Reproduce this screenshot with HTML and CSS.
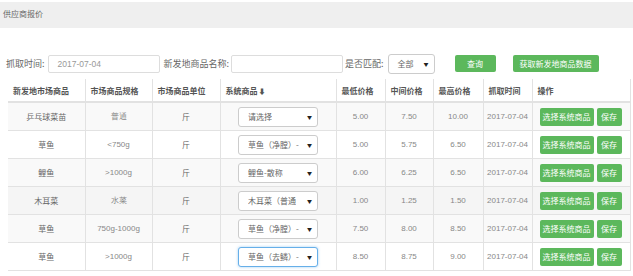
FILE: index.html
```html
<!DOCTYPE html>
<html>
<head>
<meta charset="utf-8">
<link rel="stylesheet" href="styles.css">
</head>
<body>
<div class="title-bar">供应商报价</div>
<div class="search">
  <span class="label">抓取时间:</span>
  <div class="input date">2017-07-04</div>
  <span class="label">新发地商品名称:</span>
  <div class="input name"></div>
  <span class="label">是否匹配:</span>
  <div class="select filter"><span>全部</span><span class="arrow">▼</span></div>
  <button class="btn query">查询</button>
  <button class="btn fetch">获取新发地商品数据</button>
</div>
<table class="grid">
  <colgroup>
    <col style="width:77px"><col style="width:67px"><col style="width:68px"><col style="width:116px">
    <col style="width:49px"><col style="width:48px"><col style="width:50px"><col style="width:49px"><col style="width:98px">
  </colgroup>
  <thead>
    <tr><th>新发地市场商品</th><th>市场商品规格</th><th>市场商品单位</th><th>系统商品<span class="sort">⬇</span></th><th>最低价格</th><th>中间价格</th><th>最高价格</th><th>抓取时间</th><th>操作</th></tr>
  </thead>
  <tbody>
    <tr class="odd"><td>乒乓球菜苗</td><td>普通</td><td>斤</td><td><div class="select cell"><span>请选择</span><span class="arrow">▼</span></div></td><td>5.00</td><td>7.50</td><td>10.00</td><td>2017-07-04</td><td class="ops"><button class="btn sm">选择系统商品</button><button class="btn sm save">保存</button></td></tr>
    <tr><td>草鱼</td><td>&lt;750g</td><td>斤</td><td><div class="select cell"><span>草鱼（净膛）-</span><span class="arrow">▼</span></div></td><td>5.00</td><td>5.75</td><td>6.50</td><td>2017-07-04</td><td class="ops"><button class="btn sm">选择系统商品</button><button class="btn sm save">保存</button></td></tr>
    <tr class="odd"><td>鲤鱼</td><td>&gt;1000g</td><td>斤</td><td><div class="select cell"><span>鲤鱼-散称</span><span class="arrow">▼</span></div></td><td>6.00</td><td>6.25</td><td>6.50</td><td>2017-07-04</td><td class="ops"><button class="btn sm">选择系统商品</button><button class="btn sm save">保存</button></td></tr>
    <tr class="hover"><td>木耳菜</td><td>水菜</td><td>斤</td><td><div class="select cell"><span>木耳菜（普通</span><span class="arrow">▼</span></div></td><td>1.00</td><td>1.25</td><td>1.50</td><td>2017-07-04</td><td class="ops"><button class="btn sm">选择系统商品</button><button class="btn sm save">保存</button></td></tr>
    <tr class="odd"><td>草鱼</td><td>750g-1000g</td><td>斤</td><td><div class="select cell"><span>草鱼（净膛）-</span><span class="arrow">▼</span></div></td><td>7.50</td><td>8.00</td><td>8.50</td><td>2017-07-04</td><td class="ops"><button class="btn sm">选择系统商品</button><button class="btn sm save">保存</button></td></tr>
    <tr><td>草鱼</td><td>&gt;1000g</td><td>斤</td><td><div class="select cell focus"><span>草鱼（去鳞）-</span><span class="arrow">▼</span></div></td><td>8.50</td><td>8.75</td><td>9.00</td><td>2017-07-04</td><td class="ops"><button class="btn sm">选择系统商品</button><button class="btn sm save">保存</button></td></tr>
  </tbody>
</table>
</body>
</html>
```
FILE: styles.css
```css
html, body {
  margin: 0;
  padding: 0;
  background: #fff;
  font-family: "Noto Sans CJK SC", "Liberation Sans", sans-serif;
  font-size: 8px;
  color: #666;
}
.title-bar {
  margin-top: 2px;
  height: 26px;
  line-height: 24px;
  background: #efefef;
  padding-left: 3px;
  color: #666;
  font-size: 8px;
}
.search {
  display: flex;
  align-items: center;
  margin-top: 26px;
  padding-left: 6px;
  height: 19px;
}
.label {
  color: #666;
  white-space: nowrap;
  font-size: 9px;
}
.input {
  box-sizing: border-box;
  height: 18px;
  border: 1px solid #ddd;
  border-radius: 2px;
  padding-left: 9px;
  line-height: 16px;
  color: #999;
  font-family: "Liberation Sans", sans-serif;
  font-size: 8.5px;
}
.input.date { width: 112px; margin-left: 3px; margin-right: 4px; }
.input.name { width: 112px; margin-left: 2px; margin-right: 2px; }
.select {
  box-sizing: border-box;
  display: flex;
  align-items: center;
  justify-content: space-between;
  border: 1px solid #ccc;
  border-radius: 3px;
  background: #fff;
  color: #666;
}
.select .arrow {
  font-size: 5px;
  color: #222;
  flex: none;
}
.select.filter {
  width: 47px;
  height: 20px;
  margin-left: 4px;
  padding: 0 5px 0 9px;
}
.btn {
  border: none;
  border-radius: 2px;
  background: #5cb85c;
  color: #fff;
  font-family: "Noto Sans CJK SC", sans-serif;
  font-size: 8px;
  padding: 0;
  cursor: pointer;
}
.btn.query { width: 41px; height: 17px; margin-left: 20px; }
.btn.fetch { width: 86px; height: 17px; margin-left: 17px; }
.grid {
  margin-top: 6px;
  margin-left: 8px;
  width: 622px;
  border-collapse: collapse;
  table-layout: fixed;
}
.grid th, .grid td {
  border: 1px solid #e2e2e2;
  padding: 0;
  white-space: nowrap;
  overflow: hidden;
}
.grid th {
  height: 22px;
  text-align: left;
  padding-left: 5px;
  font-weight: bold;
  color: #555;
  font-size: 8px;
  border-top: none;
  border-bottom-width: 2px;
}
.grid th:first-child, .grid td:first-child { border-left: none; }
.sort { font-size: 7px; margin-left: 1px; }
.grid td {
  height: 27px;
  text-align: center;
  color: #666;
}
.grid td:nth-child(n+5):nth-child(-n+8), .grid td:nth-child(2) {
  font-family: "Liberation Sans", sans-serif;
  font-size: 8px;
  color: #888;
}
.grid tr.odd td { background: #f9f9f9; }
.grid tr.hover td { background: #f5f5f5; }
.select.cell {
  width: 80px;
  height: 20px;
  margin: 0 auto;
  padding: 0 5px 0 9px;
  text-align: left;
  overflow: hidden;
}
.select.cell span:first-child { overflow: hidden; white-space: nowrap; }
.select.focus {
  border-color: #66afe9;
  box-shadow: 0 0 3px rgba(102, 175, 233, 0.6);
}
.grid td.ops {
  text-align: left;
  padding-left: 7px;
}
.btn.sm {
  height: 18px;
  width: 54px;
  font-size: 8px;
  vertical-align: middle;
}
.btn.sm.save {
  width: 25px;
  margin-left: 3px;
}
```
